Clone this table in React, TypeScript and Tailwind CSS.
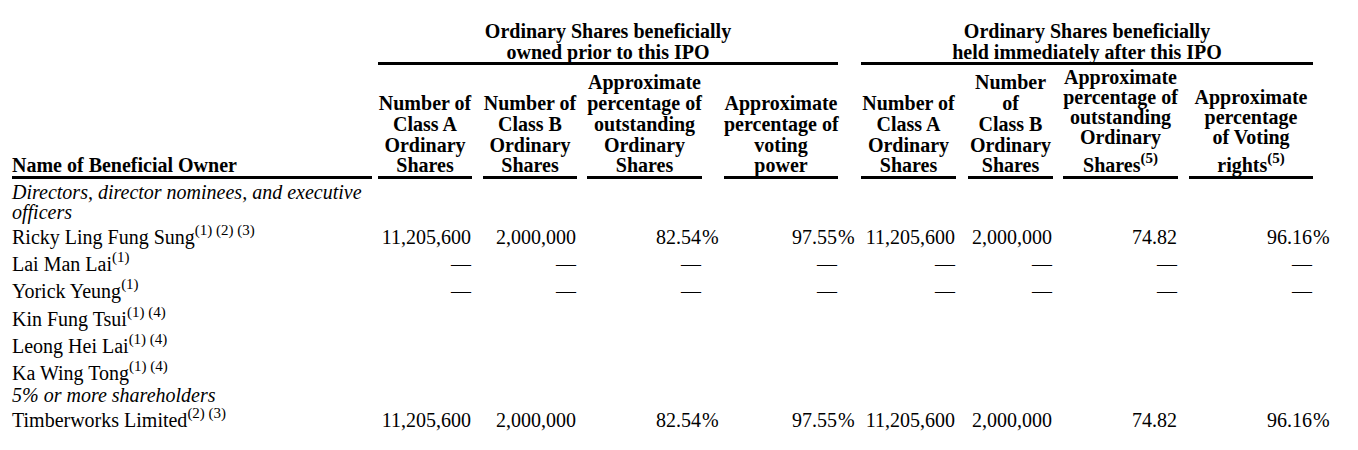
import type { ReactNode } from "react"

// grid tracks: name | sp | A | sp | B | sp | C | sp | D | sp | E | sp | F | sp | G | sp | H | tail
const grid =
  "grid grid-cols-[360px_6px_94px_11px_94px_10px_115px_22px_114px_23px_95px_12px_85px_10px_115px_11px_124px_30px]"

const Sup = ({ children }: { children: ReactNode }) => (
  <sup className="top-[-9px] text-[15px]">{children}</sup>
)

type Row =
  | { kind: "cat"; lines: string[] }
  | { kind: "data"; name: string; sup: string; vals: string[] }

const full = ["11,205,600", "2,000,000", "82.54%", "97.55%", "11,205,600", "2,000,000", "74.82", "96.16%"]
const dashes = Array(8).fill("—")
const blank = Array(8).fill("")

const rows: Row[] = [
  { kind: "cat", lines: ["Directors, director nominees, and executive", "officers"] },
  { kind: "data", name: "Ricky Ling Fung Sung", sup: "(1) (2) (3)", vals: full },
  { kind: "data", name: "Lai Man Lai", sup: "(1)", vals: dashes },
  { kind: "data", name: "Yorick Yeung", sup: "(1)", vals: dashes },
  { kind: "data", name: "Kin Fung Tsui", sup: "(1) (4)", vals: blank },
  { kind: "data", name: "Leong Hei Lai", sup: "(1) (4)", vals: blank },
  { kind: "data", name: "Ka Wing Tong", sup: "(1) (4)", vals: blank },
  { kind: "cat", lines: ["5% or more shareholders"] },
  { kind: "data", name: "Timberworks Limited", sup: "(2) (3)", vals: full },
]

function ColHead({ lines, last, start }: { lines: string[]; last?: ReactNode; start: string }) {
  return (
    <div className={`${start} row-start-2 self-end border-b-[3px] border-black text-center font-bold whitespace-nowrap`}>
      {lines.map((l) => (
        <div key={l} className={last ? "leading-[20px]" : "leading-[20.75px]"}>
          {l}
        </div>
      ))}
      {last && <div className="pt-[8px] leading-[21px]">{last}</div>}
    </div>
  )
}

function DataRow({ name, sup, vals }: { name: string; sup: string; vals: string[] }) {
  const cells: ReactNode[] = []
  vals.forEach((v, i) => {
    const pct = v.endsWith("%")
    cells.push(
      <div key={"v" + i} className="text-right pr-[1px]">
        {pct ? v.slice(0, -1) : v}
      </div>
    )
    cells.push(
      <div key={"p" + i} className="whitespace-nowrap">
        {pct ? "%" : ""}
      </div>
    )
  })
  return (
    <div className={`${grid} pt-[4px] pb-[1.2px] leading-[22px]`}>
      <div className="whitespace-nowrap">
        {name}
        <Sup>{sup}</Sup>
      </div>
      <div />
      {cells}
    </div>
  )
}

export default function App() {
  return (
    <div className="min-h-[450px] bg-white pl-[12px] pt-[21px] text-[20px] text-black font-['Liberation_Serif','Times_New_Roman',serif]">
      <div className={`${grid} grid-rows-[auto_auto] gap-y-[2px]`}>
        <div className="col-start-1 row-start-1 row-span-2 self-end border-b-[3px] border-black font-bold leading-[20.75px] whitespace-nowrap">
          Name of Beneficial Owner
        </div>
        <div className="col-start-3 col-end-10 row-start-1 border-b-[3px] border-black text-center font-bold leading-[20.5px]">
          Ordinary Shares beneficially
          <br />
          owned prior to this IPO
        </div>
        <div className="col-start-11 col-end-18 row-start-1 border-b-[3px] border-black text-center font-bold leading-[20.5px]">
          Ordinary Shares beneficially
          <br />
          held immediately after this IPO
        </div>

        <ColHead start="col-start-3" lines={["Number of", "Class A", "Ordinary", "Shares"]} />
        <ColHead start="col-start-5" lines={["Number of", "Class B", "Ordinary", "Shares"]} />
        <ColHead start="col-start-7" lines={["Approximate", "percentage of", "outstanding", "Ordinary", "Shares"]} />
        <ColHead start="col-start-9" lines={["Approximate", "percentage of", "voting", "power"]} />
        <ColHead start="col-start-11" lines={["Number of", "Class A", "Ordinary", "Shares"]} />
        <ColHead start="col-start-13" lines={["Number", "of", "Class B", "Ordinary", "Shares"]} />
        <ColHead
          start="col-start-15"
          lines={["Approximate", "percentage of", "outstanding", "Ordinary"]}
          last={
            <>
              Shares<Sup>(5)</Sup>
            </>
          }
        />
        <ColHead
          start="col-start-17"
          lines={["Approximate", "percentage", "of Voting"]}
          last={
            <>
              rights<Sup>(5)</Sup>
            </>
          }
        />
      </div>

      <div className="pt-[3px]">
        {rows.map((r, i) =>
          r.kind === "cat" ? (
            <div key={i} className="italic leading-[20px] whitespace-nowrap">
              {r.lines.map((l) => (
                <div key={l}>{l}</div>
              ))}
            </div>
          ) : (
            <DataRow key={i} name={r.name} sup={r.sup} vals={r.vals} />
          )
        )}
      </div>
    </div>
  )
}
